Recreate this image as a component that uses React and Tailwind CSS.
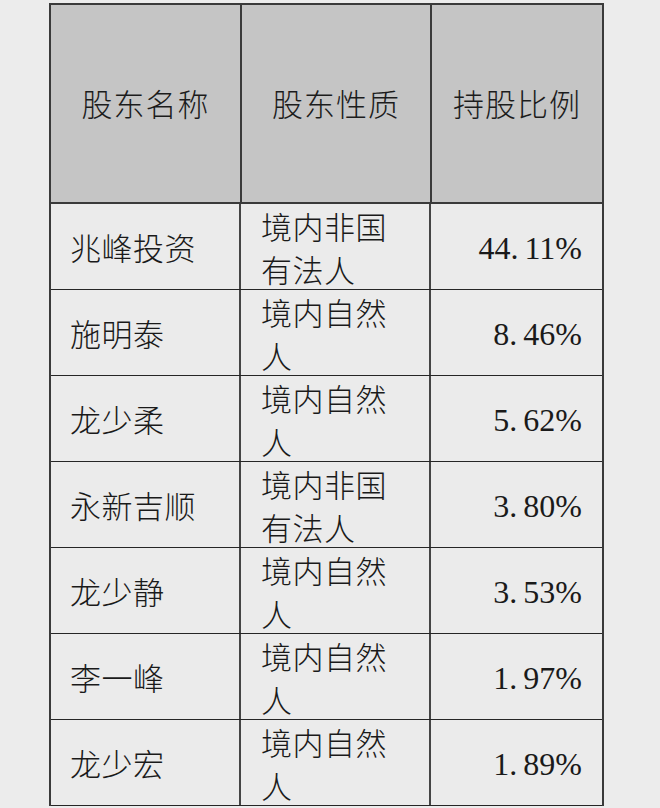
import React from "react";

const rows = [
  ["兆峰投资", ["境内非国", "有法人"], "44.11%"],
  ["施明泰", ["境内自然", "人"], "8.46%"],
  ["龙少柔", ["境内自然", "人"], "5.62%"],
  ["永新吉顺", ["境内非国", "有法人"], "3.80%"],
  ["龙少静", ["境内自然", "人"], "3.53%"],
  ["李一峰", ["境内自然", "人"], "1.97%"],
  ["龙少宏", ["境内自然", "人"], "1.89%"],
];

const cjk = { fontFamily: '"Noto Sans CJK SC", sans-serif' };
const num = { fontFamily: '"Liberation Serif", "Noto Sans CJK SC", serif' };

function Pct({ v }) {
  const [a, b] = v.split(".");
  return (
    <span style={num} className="text-[32px] text-[#1a1a1a]">
      {a}.<span className="inline-block w-[6px]" />{b}
    </span>
  );
}

export default function App() {
  return (
    <div className="w-[660px] h-[808px] bg-[#ececec] overflow-hidden pt-[3px] pl-[49px]">
      <div className="w-[555px] border-l-2 border-r-2 border-t-2 border-[#3a3a3a]">
        <div className="flex h-[199px] bg-[#c5c5c5] border-b-2 border-[#3a3a3a]" style={cjk}>
          <div className="w-[189px] flex items-center justify-center text-[31px] font-light text-[#1c1c1c] tracking-[1px]">股东名称</div>
          <div className="w-[190px] border-l-2 border-[#3a3a3a] flex items-center justify-center text-[31px] font-light text-[#1c1c1c] tracking-[1px]">股东性质</div>
          <div className="flex-1 border-l-2 border-[#3a3a3a] flex items-center justify-center text-[31px] font-light text-[#1c1c1c] tracking-[1px]">持股比例</div>
        </div>
        {rows.map(([name, kind, pct], i) => (
          <div key={i} className="flex h-[86px] bg-[#ebebeb] border-b border-[#262626]">
            <div className="w-[188px] flex items-center pl-[19px] pt-[2px] text-[31px] font-light text-[#1a1a1a] tracking-[0.5px]" style={cjk}>{name}</div>
            <div className="w-[190px] border-l-2 border-[#444] pl-[20px] text-[31px] font-light text-[#1a1a1a] leading-[43px] tracking-[0.5px]" style={cjk}>
              <div>{kind[0]}</div>
              <div>{kind[1]}</div>
            </div>
            <div className="flex-1 border-l-2 border-[#444] flex items-center justify-end pr-[20px] pt-[2px]">
              <Pct v={pct} />
            </div>
          </div>
        ))}
      </div>
    </div>
  );
}
